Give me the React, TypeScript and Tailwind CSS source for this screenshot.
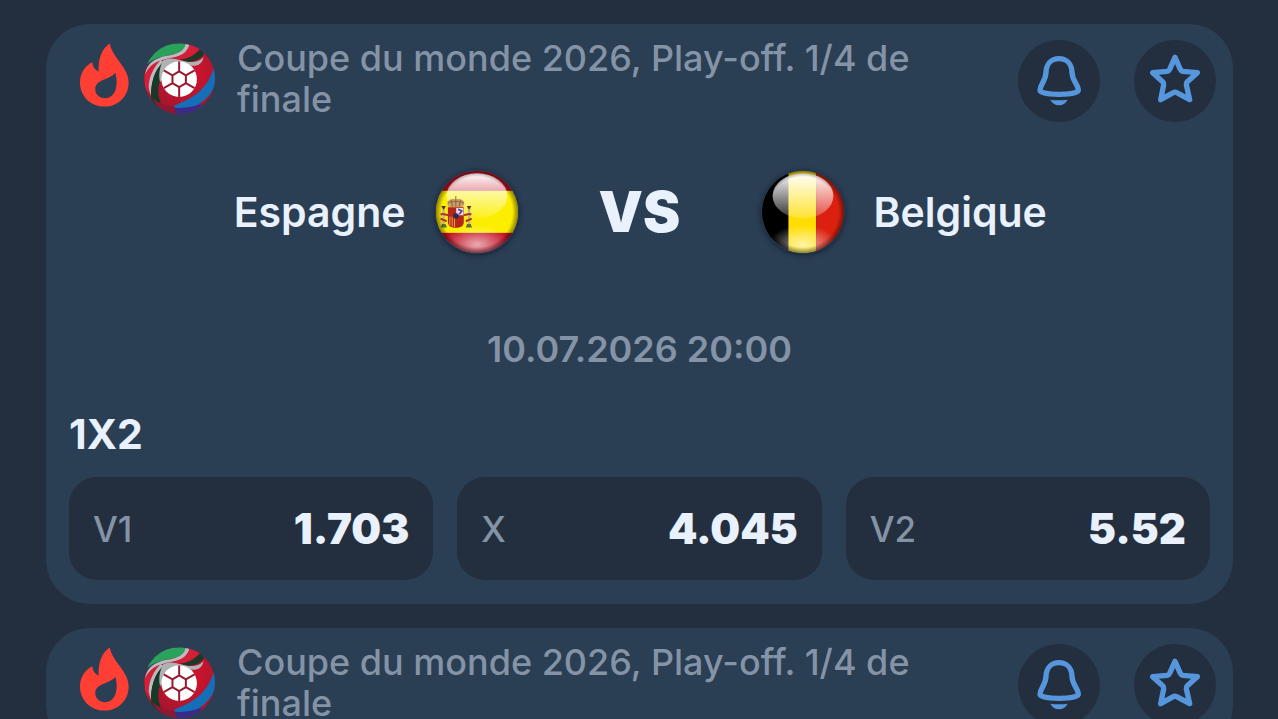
type Team = { name: string; flag: 'es' | 'be' };

type Match = {
  id: number;
  league: string;
  home?: Team;
  away?: Team;
  startsAt?: string;
  market?: string;
  odds?: { label: string; value: string }[];
};

const matches: Match[] = [
  {
    id: 1,
    league: 'Coupe du monde 2026, Play-off. 1/4 de finale',
    home: { name: 'Espagne', flag: 'es' },
    away: { name: 'Belgique', flag: 'be' },
    startsAt: '10.07.2026 20:00',
    market: '1X2',
    odds: [
      { label: 'V1', value: '1.703' },
      { label: 'X', value: '4.045' },
      { label: 'V2', value: '5.52' }
    ]
  },
  { id: 2, league: 'Coupe du monde 2026, Play-off. 1/4 de finale' }
];

function FlameIcon() {
  return (
    <svg viewBox="60 39 148 193" className="mt-[5px] h-16 w-[49px] shrink-0" aria-hidden="true">
      <path
        fill="#ff3f34"
        fillRule="evenodd"
        d="M150 40C125 56 115 86 116 126C105 120 98 110 97 97C75 108 60 130 60 158C60 199 92 231 134 231C175 231 207 200 207 158C207 112 158 84 150 40ZM167 129C170 143 172 155 170 168C167 191 155 205 135 206C119 206 106 194 106 178C107 148 150 151 167 129Z"
      />
    </svg>
  );
}

function LeagueLogo({ id }: { id: number }) {
  const clip = `league-${id}`;
  return (
    <svg viewBox="254 37 212 212" className="mt-[5px] ml-[15px] size-[71px] shrink-0" aria-hidden="true">
      <clipPath id={clip}>
        <circle cx="360" cy="143" r="106" />
      </clipPath>
      <radialGradient id={`${clip}-red`} cx="0.6" cy="0.4" r="0.6">
        <stop offset="0" stopColor="#d8142c" />
        <stop offset="1" stopColor="#a5152e" />
      </radialGradient>
      <g clipPath={`url(#${clip})`}>
        <rect x="254" y="37" width="212" height="212" fill={`url(#${clip}-red)`} />
        <path d="M254 37H395C370 68 325 70 290 86C270 96 262 108 254 128Z" fill="#2b3f55" />
        <path d="M262 90C282 50 330 34 378 40C374 62 350 70 324 74C300 78 278 86 264 100Z" fill="#27a35b" />
        <path d="M378 40C374 64 346 72 318 76C290 82 270 94 260 118L256 136C270 104 296 88 332 82C360 78 384 68 390 42Z" fill="#b9bcbe" />
        <path d="M390 42C382 68 360 78 340 80L364 86C394 80 412 66 420 52Z" fill="#d51f39" />
        <path d="M256 134C268 106 284 95 304 90C286 112 268 144 270 190L256 168Z" fill="#d51f39" />
        <path d="M304 88C284 108 268 138 268 170L274 196C276 150 288 118 312 94Z" fill="#b9bcbe" />
        <path d="M312 92C284 120 272 156 276 208C288 226 302 234 314 238C296 206 292 176 302 152Z" fill="#173a28" />
        <path d="M424 54C402 76 386 84 360 87L384 93C412 92 426 82 433 68Z" fill="#173a28" />
        <path d="M312 88C340 74 368 94 394 94C412 94 424 88 432 78C428 102 410 108 392 104C360 98 330 110 302 154C296 130 302 106 312 88Z" fill="#aeb2b5" />
        <path d="M464 104C450 160 418 196 348 222L334 234C400 250 470 200 476 120Z" fill="#136fb8" />
        <path d="M332 228C360 234 398 230 428 218L410 249H350Z" fill="#3a2a8a" />
        <path d="M276 200C300 220 322 226 344 226L352 249H310Z" fill="#8e1834" />
      </g>
      <circle cx="359" cy="145" r="53" fill="#fff" />
      <path
        d="M359 122L379 134V157L359 169L339 157V134ZM359 122V92M379 134L405 119M379 157L405 172M359 169V198M339 157L313 172M339 134L313 119"
        fill="none"
        stroke="#971a30"
        strokeWidth="6"
        strokeLinejoin="round"
      />
    </svg>
  );
}

function Flag({ code }: { code: Team['flag'] }) {
  return (
    <svg viewBox="-3 -3 254 254" className="size-[84px] shrink-0 rounded-full shadow-[0_1px_5px_rgba(10,18,28,0.7)]" aria-hidden="true">
      <defs>
        <clipPath id={`flag-${code}`}>
          <circle cx="124" cy="124" r="124" />
        </clipPath>
        <linearGradient id={`gloss-${code}`} x1="0" y1="0" x2="0" y2="1">
          <stop offset="0" stopColor="#fff" stopOpacity="0.98" />
          <stop offset="1" stopColor="#fff" stopOpacity={code === 'es' ? 0.12 : 0.2} />
        </linearGradient>
        <radialGradient id={`glow-${code}`} cx="0.5" cy="0.5" r="0.5">
          <stop offset="0" stopColor="#fff" stopOpacity="0.65" />
          <stop offset="1" stopColor="#fff" stopOpacity="0" />
        </radialGradient>
        <radialGradient id={`edge-${code}`} cx="0.5" cy="0.5" r="0.5">
          <stop offset="0.86" stopColor="#000" stopOpacity="0" />
          <stop offset="1" stopColor="#000" stopOpacity="0.45" />
        </radialGradient>
      </defs>
      <g clipPath={`url(#flag-${code})`}>
        {code === 'es' ? (
          <>
            <rect width="248" height="248" fill="#c40d22" />
            <rect y="60" width="248" height="127" fill="#fbee00" />
          </>
        ) : (
          <>
            <rect width="248" height="248" fill="#000" />
            <rect x="80" width="84" height="248" fill="#ffdd00" />
            <rect x="164" width="84" height="248" fill="#dc2010" />
          </>
        )}
        <ellipse cx="124" cy="222" rx="105" ry="58" fill={`url(#glow-${code})`} />
        <ellipse cx="124" cy="75" rx="92" ry="68" fill={`url(#gloss-${code})`} />
        {code === 'es' && (
          <g>
            <path d="M36 104C30 90 44 82 60 86C76 82 90 90 84 104L80 110H40Z" fill="#c9a06a" />
            <path d="M60 76V108M46 88L50 108M74 88L70 108M36 97C50 90 70 90 84 97" fill="none" stroke="#8d6238" strokeWidth="3" />
            <path d="M36 110H84V154C84 166 74 172 60 172C46 172 36 166 36 154Z" fill="#b5251c" />
            <path d="M61 112H83V134H61Z" fill="#e4dcec" />
            <path d="M67 116L78 121L70 131" fill="none" stroke="#5a3f93" strokeWidth="5" />
            <path d="M42 138V164M49 138V168M56 138V170" stroke="#e6a92d" strokeWidth="3" />
            <ellipse cx="60" cy="136" rx="9" ry="8" fill="#2d2855" />
            <path d="M23 112V164M100 112V164" stroke="#c9b490" strokeWidth="8" />
            <path d="M16 106H30L23 117ZM93 106H107L100 117Z" fill="#513022" />
            <path d="M14 132C24 126 30 136 38 132M14 144L32 152M107 132C97 126 92 136 84 132M108 144L90 152" fill="none" stroke="#b5312a" strokeWidth="6" />
            <path d="M14 171L18 160H29L33 171ZM90 171L94 160H105L109 171Z" fill="#5d7139" />
          </g>
        )}
        <circle cx="124" cy="124" r="124" fill={`url(#edge-${code})`} />
      </g>
    </svg>
  );
}

function BellIcon() {
  return (
    <svg viewBox="55 30 246 246" className="size-full" aria-hidden="true">
      <path
        d="M178 86C154 86 140 103 139 127C138 154 121 163 121 181C121 190 150 193 178 193C206 193 236 190 236 181C236 163 218 154 217 127C216 103 202 86 178 86Z"
        fill="none"
        stroke="#5696dc"
        strokeWidth="16"
        strokeLinejoin="round"
      />
      <path d="M152 209C168 211 188 211 204 209C198 220 189 226 178 226C167 226 158 220 152 209Z" fill="#5696dc" />
    </svg>
  );
}

function StarIcon() {
  return (
    <svg viewBox="404 30 246 246" className="size-full" aria-hidden="true">
      <path
        d="M527 82L543 118Q545 123 551 124L594 128L564 155Q560 159 561 164L571 209L532 188Q527 185 522 188L484 209L493 164Q494 159 490 155L460 128L503 124Q509 123 511 118Z"
        fill="none"
        stroke="#5696dc"
        strokeWidth="16"
        strokeLinejoin="round"
      />
    </svg>
  );
}

function MatchCard({ match }: { match: Match }) {
  return (
    <article className="rounded-[44px] bg-[#2a3e54] pb-6">
      <header className="flex items-start pt-3.5 pr-[17px] pl-[34px]">
        <FlameIcon />
        <LeagueLogo id={match.id} />
        <h2 className="ml-[22px] max-w-[700px] flex-1 text-[36px] leading-[41px] font-medium text-[#8493a5]">{match.league}</h2>
        <div className="mt-0.5 ml-auto flex gap-[34px]">
          <button type="button" aria-label="Notifications" className="size-[82px] rounded-full bg-[#232f3f]">
            <BellIcon />
          </button>
          <button type="button" aria-label="Favoris" className="size-[82px] rounded-full bg-[#232f3f]">
            <StarIcon />
          </button>
        </div>
      </header>

      {match.home && match.away && (
        <div className="mt-12 grid grid-cols-[1fr_242px_1fr] items-center text-[41px] leading-[48px] font-semibold text-[#e9f1fc]">
          <div className="flex items-center justify-end gap-[29px]">
            <span>{match.home.name}</span>
            <Flag code={match.home.flag} />
          </div>
          <span className="text-center text-[56px] leading-[60px] font-black">VS</span>
          <div className="flex items-center gap-[29px]">
            <Flag code={match.away.flag} />
            <span>{match.away.name}</span>
          </div>
        </div>
      )}

      {match.startsAt && <p className="mt-[75px] text-center text-[36px] leading-10 font-semibold text-[#8493a5]">{match.startsAt}</p>}

      {match.odds && (
        <section className="mt-[41px] px-[23px]">
          <h3 className="text-[41px] leading-[48px] font-bold text-[#e9f1fc]">{match.market}</h3>
          <div className="mt-[19px] grid grid-cols-3 gap-6">
            {match.odds.map((odd) => (
              <button key={odd.label} type="button" className="flex h-[103px] items-center justify-between rounded-[28px] bg-[#232f3f] px-6">
                <span className="text-[35px] leading-10 font-medium text-[#8493a5]">{odd.label}</span>
                <span className="text-[42px] leading-[48px] font-black text-[#e9f1fc]">{odd.value}</span>
              </button>
            ))}
          </div>
        </section>
      )}
    </article>
  );
}

export default function App() {
  return (
    <main className="flex h-screen flex-col gap-6 overflow-y-auto bg-[#232f3f] pt-6 pr-[45px] pl-[46px] font-['Inter',sans-serif] [scrollbar-width:none]">
      {matches.map((match) => (
        <MatchCard key={match.id} match={match} />
      ))}
    </main>
  );
}
